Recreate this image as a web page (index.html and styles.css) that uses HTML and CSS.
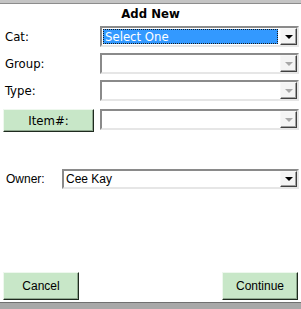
FILE: index.html
```html
<!DOCTYPE html>
<html lang="en">
<head>
    <meta charset="UTF-8">
    <title>Add New</title>
    <link rel="stylesheet" href="styles.css">
</head>
<body>
    <div class="panel">
        <h2 class="panel-title">Add New</h2>

        <div class="form-row">
            <span class="form-label">Cat:</span>
            <div class="combo">
                <span class="combo-value selected">Select One</span>
                <span class="combo-btn"><i class="arrow"></i></span>
            </div>
        </div>

        <div class="form-row">
            <span class="form-label">Group:</span>
            <div class="combo">
                <span class="combo-value"></span>
                <span class="combo-btn disabled"><i class="arrow"></i></span>
            </div>
        </div>

        <div class="form-row">
            <span class="form-label">Type:</span>
            <div class="combo">
                <span class="combo-value"></span>
                <span class="combo-btn disabled"><i class="arrow"></i></span>
            </div>
        </div>

        <div class="form-row item-row">
            <button class="green-btn item-btn">Item#:</button>
            <div class="combo">
                <span class="combo-value"></span>
                <span class="combo-btn disabled"><i class="arrow"></i></span>
            </div>
        </div>

        <div class="form-row owner-row">
            <span class="owner-label">Owner:</span>
            <div class="combo owner-combo">
                <span class="combo-value owner-value">Cee Kay</span>
                <span class="combo-btn"><i class="arrow"></i></span>
            </div>
        </div>

        <div class="panel-footer">
            <button class="green-btn footer-btn">Cancel</button>
            <button class="green-btn footer-btn">Continue</button>
        </div>
    </div>
</body>
</html>
```

FILE: styles.css
```css
* {
    margin: 0;
    padding: 0;
    box-sizing: border-box;
}

body {
    width: 301px;
    height: 309px;
    background: #ffffff;
    font-family: 'DejaVu Sans Condensed', 'DejaVu Sans', sans-serif;
    font-size: 12px;
    color: #000000;
    overflow: hidden;
}

.panel {
    height: 309px;
    display: flex;
    flex-direction: column;
    border-top: 3px solid #c4c4c4;
    border-bottom: 6px solid #a8a8a8;
    position: relative;
}

.panel::before {
    content: "";
    display: block;
    height: 1px;
    background: #8c8c8c;
}

.panel::after {
    content: "";
    display: block;
    height: 1px;
    background: #707070;
    margin-top: 2px;
}

.panel-title {
    height: 22px;
    line-height: 19px;
    text-align: center;
    font-size: 13px;
    font-weight: bold;
}

.form-row {
    display: flex;
    align-items: center;
    height: 21px;
    margin-bottom: 6px;
}

.form-label {
    width: 100px;
    padding-left: 5px;
    font-size: 13px;
}

.combo {
    width: 199px;
    height: 21px;
    display: flex;
    border: 2px solid;
    border-color: #8a8a8a #e6e6e6 #e6e6e6 #8a8a8a;
    background: #ffffff;
}

.combo-value {
    flex: 1;
    margin: 1px 2px 1px 1px;
    font-size: 13px;
    line-height: 13px;
    padding: 1px 2px;
    white-space: nowrap;
}

.combo-value.selected {
    background: #3399ff;
    color: #ffffff;
    outline: 1px dotted #1a1a1a;
    outline-offset: -1px;
}

.combo-btn {
    width: 17px;
    display: flex;
    align-items: center;
    justify-content: center;
    background: #f4f4f4;
    border: 1px solid;
    border-color: #f8f8f8 #404040 #404040 #f8f8f8;
    box-shadow: inset -1px -1px 0 #a0a0a0;
}

.arrow {
    width: 0;
    height: 0;
    border-left: 4px solid transparent;
    border-right: 4px solid transparent;
    border-top: 4px solid #000000;
}

.combo-btn.disabled .arrow {
    border-top-color: #a8a8a8;
}

.item-row {
    margin-top: 2px;
}

.green-btn {
    background: #c8e7c8;
    border: 1px solid;
    border-color: #eef8ee #1e2a1e #1e2a1e #eef8ee;
    box-shadow: inset -1px -1px 0 #8fa88f;
    color: #000000;
    cursor: pointer;
}

.item-btn {
    width: 91px;
    height: 23px;
    margin: 2px 6px 0 3px;
    font-family: 'DejaVu Sans Condensed', 'DejaVu Sans', sans-serif;
    font-size: 13px;
}

.owner-row {
    margin-top: 32px;
}

.owner-label {
    width: 62px;
    padding-left: 6px;
    font-family: 'Liberation Sans', Arial, sans-serif;
    font-size: 12px;
}

.owner-combo {
    width: 237px;
    height: 20px;
}

.owner-value {
    font-family: 'Liberation Sans', Arial, sans-serif;
    font-size: 12px;
    padding: 1px 1px;
}

.panel-footer {
    margin-top: auto;
    display: flex;
    justify-content: space-between;
    padding: 0 3px;
}

.footer-btn {
    width: 76px;
    height: 28px;
    font-family: 'Liberation Sans', Arial, sans-serif;
    font-size: 12px;
}
```
